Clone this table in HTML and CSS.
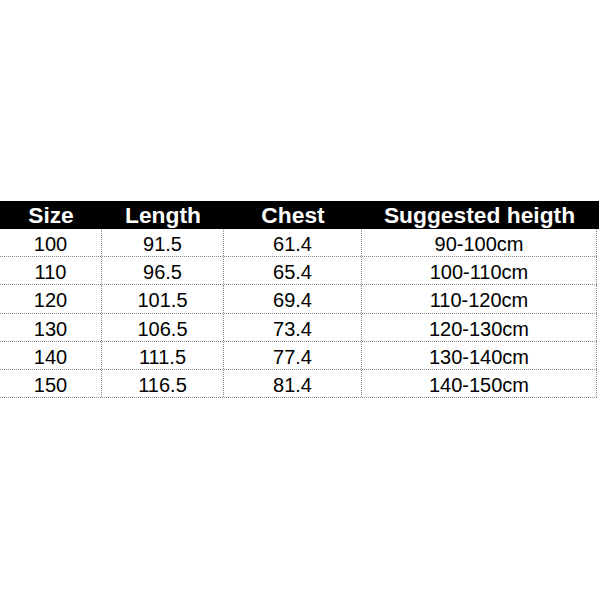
FILE: index.html
```html
<!DOCTYPE html>
<html>
<head>
<meta charset="utf-8">
<link rel="stylesheet" href="styles.css">
</head>
<body>
<div class="chart">
  <div class="row head">
    <div class="cell">Size</div>
    <div class="cell">Length</div>
    <div class="cell">Chest</div>
    <div class="cell">Suggested heigth</div>
  </div>
  <div class="row body">
    <div class="cell">100</div><div class="cell">91.5</div><div class="cell">61.4</div><div class="cell">90-100cm</div>
  </div>
  <div class="row body">
    <div class="cell">110</div><div class="cell">96.5</div><div class="cell">65.4</div><div class="cell">100-110cm</div>
  </div>
  <div class="row body">
    <div class="cell">120</div><div class="cell">101.5</div><div class="cell">69.4</div><div class="cell">110-120cm</div>
  </div>
  <div class="row body">
    <div class="cell">130</div><div class="cell">106.5</div><div class="cell">73.4</div><div class="cell">120-130cm</div>
  </div>
  <div class="row body">
    <div class="cell">140</div><div class="cell">111.5</div><div class="cell">77.4</div><div class="cell">130-140cm</div>
  </div>
  <div class="row body">
    <div class="cell">150</div><div class="cell">116.5</div><div class="cell">81.4</div><div class="cell">140-150cm</div>
  </div>
</div>
</body>
</html>
```

FILE: styles.css
```css
html, body {
  margin: 0;
  padding: 0;
  background: #ffffff;
}
body {
  width: 600px;
  height: 600px;
  font-family: "Liberation Sans", Arial, sans-serif;
  color: #000000;
}
.chart {
  padding-top: 201px;
}
.row {
  display: grid;
  grid-template-columns: 102px 122px 138px 235px;
}
.head {
  width: 599px;
  height: 28px;
  background: #000000;
  color: #ffffff;
  font-weight: bold;
  font-size: 22.8px;
}
.head .cell {
  display: flex;
  align-items: center;
  justify-content: center;
  line-height: 1;
  padding-top: 1px;
}
.body {
  width: 597px;
  height: 28.2px;
  box-sizing: border-box;
  border-bottom: 1px dotted #8a8a8a;
  font-size: 20px;
}
.body .cell {
  display: flex;
  align-items: center;
  justify-content: center;
  border-right: 1px dotted #8a8a8a;
  line-height: 1;
  padding-top: 3px;
}
```
